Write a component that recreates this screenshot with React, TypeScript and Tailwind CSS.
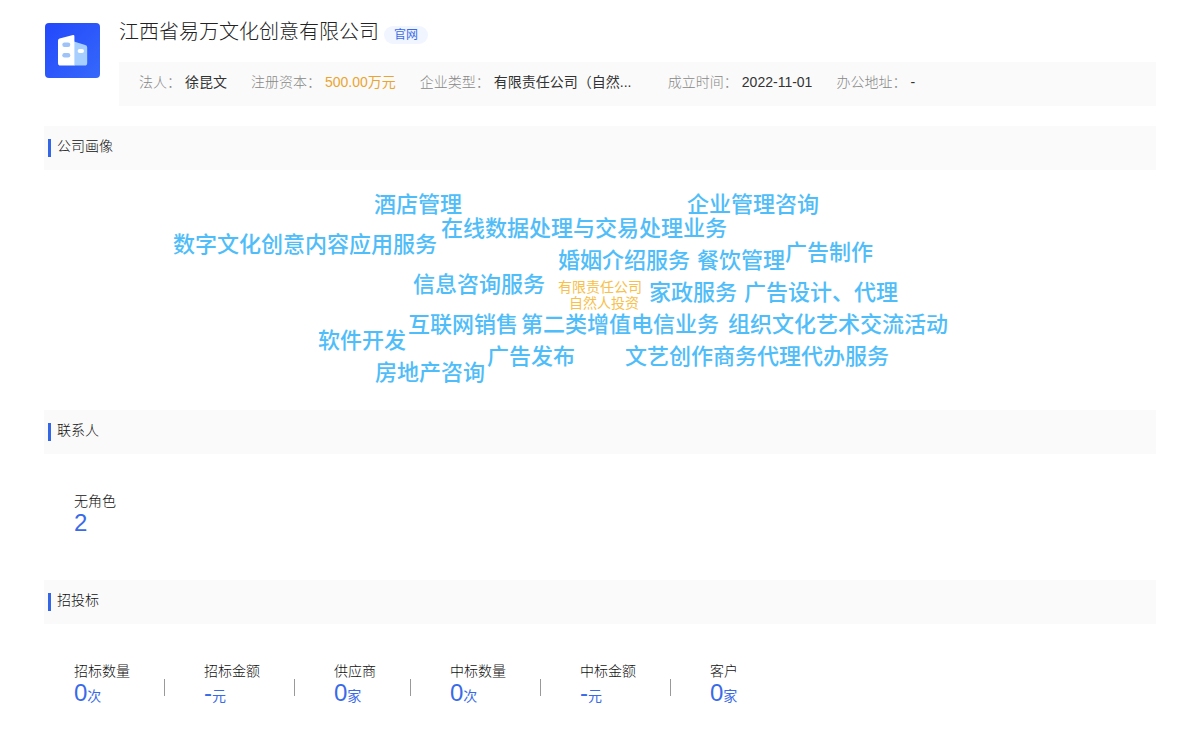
import type { ReactNode } from 'react';

const INFO = [
  { label: '法人：', value: '徐昆文', className: 'text-[#333]' },
  { label: '注册资本：', value: '500.00万元', className: 'text-[#eaa530]' },
  { label: '企业类型：', value: '有限责任公司（自然...', className: 'w-[150px] text-[#333]' },
  { label: '成立时间：', value: '2022-11-01', className: 'text-[#333]' },
  { label: '办公地址：', value: '-', className: 'text-[#333]' },
];

// positions on the 1000px wide cloud canvas
const WORDS = [
  { text: '酒店管理', x: 274, y: 19 },
  { text: '企业管理咨询', x: 587, y: 19 },
  { text: '在线数据处理与交易处理业务', x: 341, y: 43 },
  { text: '数字文化创意内容应用服务', x: 73, y: 59 },
  { text: '广告制作', x: 685, y: 67 },
  { text: '婚姻介绍服务', x: 458, y: 75 },
  { text: '餐饮管理', x: 597, y: 75 },
  { text: '信息咨询服务', x: 313, y: 99 },
  { text: '家政服务', x: 549, y: 107 },
  { text: '广告设计、代理', x: 644, y: 107 },
  { text: '互联网销售', x: 308, y: 139 },
  { text: '第二类增值电信业务', x: 421, y: 139 },
  { text: '组织文化艺术交流活动', x: 628, y: 139 },
  { text: '软件开发', x: 218, y: 155 },
  { text: '广告发布', x: 387, y: 171 },
  { text: '文艺创作商务代理代办服务', x: 525, y: 171 },
  { text: '房地产咨询', x: 275, y: 187 },
];

const BIDS = [
  { label: '招标数量', value: '0', unit: '次' },
  { label: '招标金额', value: '-', unit: '元' },
  { label: '供应商', value: '0', unit: '家' },
  { label: '中标数量', value: '0', unit: '次' },
  { label: '中标金额', value: '-', unit: '元' },
  { label: '客户', value: '0', unit: '家' },
];

function Logo() {
  return (
    <svg viewBox="0 0 55 55" className="ml-px mt-px h-[55px] w-[55px] shrink-0" aria-hidden="true">
      <defs>
        <linearGradient id="logo-bg" x1="0" y1="0" x2="1" y2="1">
          <stop offset="0" stopColor="#2348fb" />
          <stop offset="1" stopColor="#3568fb" />
        </linearGradient>
      </defs>
      <rect width="55" height="55" rx="4" fill="url(#logo-bg)" />
      <path d="M29 18.5l11.2 3.4a2.6 2.6 0 0 1 2 2.5V40a2.6 2.6 0 0 1-2.6 2.6H29z" fill="#a6ceff" />
      <path d="M14.6 15.6L28 12.1q1.4-.3 1.4 1.1v29.4H15.6a2.6 2.6 0 0 1-2.6-2.6V17.8a2.3 2.3 0 0 1 1.6-2.2z" fill="#fff" />
      <rect x="17.3" y="19.5" width="8" height="4.4" rx="2.2" fill="#9dc3f8" />
      <rect x="17.3" y="30" width="8" height="4.4" rx="2.2" fill="#9dc3f8" />
      <rect x="32.6" y="26" width="6.4" height="4" rx="2" fill="#fff" />
    </svg>
  );
}

function Section({ title, children }: { title: string; children: ReactNode }) {
  return (
    <section>
      <div className="flex h-11 items-center bg-[#fafafa] pl-1">
        <span className="h-[18px] w-[3px] bg-[#3366e6]" />
        <h2 className="mb-1 ml-1.5 text-sm font-light text-[#111]">{title}</h2>
      </div>
      {children}
    </section>
  );
}

function Stat({ label, value, unit }: { label: string; value: string; unit?: string }) {
  return (
    <div>
      <div className="text-sm font-light leading-5 text-[#111]">{label}</div>
      <div className="text-2xl leading-6 text-[#3a6ae8]">
        {value}
        {unit && <span className="text-sm leading-6">{unit}</span>}
      </div>
    </div>
  );
}

export default function App() {
  return (
    <div
      lang="zh-CN"
      className="min-h-screen bg-white px-11 pb-11 pt-[22px] font-['Liberation_Sans','Noto_Sans_CJK_SC',sans-serif]"
    >
      <header className="mb-5 flex">
        <Logo />
        <div className="ml-[19px] min-w-0 flex-1">
          <div className="mb-3 flex h-7 items-start">
            <h1 className="text-xl font-light leading-5 text-[#222]">江西省易万文化创意有限公司</h1>
            <a href="#" className="ml-[5px] mt-1 rounded-full bg-[#f0f5ff] px-2.5 text-xs leading-[18px] text-[#3a6ae8]">
              官网
            </a>
          </div>
          <dl className="flex flex-wrap gap-x-6 bg-[#fafafa] px-5 pb-3.5 pt-2.5 text-sm">
            {INFO.map((item) => (
              <div key={item.label} className="flex gap-1">
                <dt className="font-light text-[#888]">{item.label}</dt>
                <dd className={item.className}>{item.value}</dd>
              </div>
            ))}
          </dl>
        </div>
      </header>

      <Section title="公司画像">
        <div className="relative mx-auto h-60 w-[1000px] leading-8">
          {WORDS.map((word) => (
            <span
              key={word.text}
              className="absolute whitespace-nowrap text-[22px] font-medium text-[#4fbdf9]"
              style={{ left: word.x, top: word.y }}
            >
              {word.text}
            </span>
          ))}
          <span className="absolute left-[458px] top-[109px] w-24 text-sm leading-4 text-[#f8c04a]">
            有限责任公司
            <br />
            <span className="pl-[11px]">自然人投资</span>
          </span>
        </div>
      </Section>

      <Section title="联系人">
        <div className="px-[30px] pb-[45px] pt-[37px]">
          <Stat label="无角色" value="2" />
        </div>
      </Section>

      <Section title="招投标">
        <div className="flex flex-wrap px-[30px] pt-[37px]">
          {BIDS.map((bid, i) => (
            <div key={bid.label} className="flex items-center">
              {i > 0 && <span className="ml-[34px] mr-[39px] mt-1.5 h-[17px] w-px bg-[#999]" />}
              <Stat {...bid} />
            </div>
          ))}
        </div>
      </Section>
    </div>
  );
}
